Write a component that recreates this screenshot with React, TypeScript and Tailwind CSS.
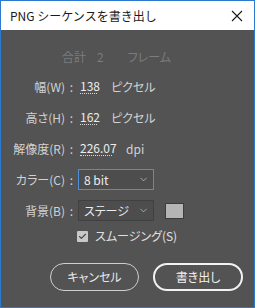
import { ChevronDown, Check } from 'lucide-react'

const font = { fontFamily: '"Noto Sans CJK JP", "Noto Sans", sans-serif' }

function Row({ label, children }: { label: string; children: React.ReactNode }) {
  return (
    <div className="flex h-[31px] items-center">
      <div className="w-[64px] shrink-0 text-right text-[12px] text-[#d2d2d2]">{label}</div>
      <div className="w-[13px] shrink-0 text-center text-[12px] text-[#d2d2d2]">:</div>
      <div className="flex items-center">{children}</div>
    </div>
  )
}

function Value({ v, w }: { v: string; w: string }) {
  return (
    <span className={`ml-[2px] ${w} border-b border-dotted border-[#d8d8d8] text-[12px] leading-[14px] text-[#ececec]`}>{v}</span>
  )
}

export default function App() {
  return (
    <div className="flex h-[308px] w-[255px] flex-col border border-[#2b79d0] bg-[#535353]" style={font}>
      {/* title bar */}
      <div className="flex h-[29px] shrink-0 items-center justify-between bg-white pl-[9px] pr-[10px]">
        <span className="text-[12px] text-[#1a1a1a]">PNG シーケンスを書き出し</span>
        <svg width="12" height="12" viewBox="0 0 12 12" className="mr-[1px]">
          <path d="M1 1 L11 11 M11 1 L1 11" stroke="#1a1a1a" strokeWidth="1.1" />
        </svg>
      </div>

      <div className="flex flex-col [font-feature-settings:'palt']">
        <div className="mt-[17px] flex h-[20px] items-center pl-[61px] text-[12px] text-[#7c7c7c]">
          <span>合計</span>
          <span className="ml-[11px]">2</span>
          <span className="ml-[24px]">フレーム</span>
        </div>

        <div className="mt-[4px] flex flex-col">
          <Row label="幅(W)">
            <Value v="138" w="w-[17px]" />
            <span className="ml-[14px] text-[12px] text-[#d2d2d2]">ピクセル</span>
          </Row>
          <Row label="高さ(H)">
            <Value v="162" w="w-[17px]" />
            <span className="ml-[14px] text-[12px] text-[#d2d2d2]">ピクセル</span>
          </Row>
          <Row label="解像度(R)">
            <Value v="226.07" w="w-[32px]" />
            <span className="ml-[14px] text-[12px] text-[#d2d2d2]">dpi</span>
          </Row>
          <Row label="カラー(C)">
            <div className="flex h-[21px] w-[76px] items-center justify-between border border-[#4b8fd8] bg-[#4d4d4d] pl-[5px] pr-[4px] text-[12px] text-[#ececec]">
              <span>8 bit</span>
              <ChevronDown size={11} strokeWidth={1.5} className="text-[#cfcfcf]" />
            </div>
          </Row>
          <Row label="背景(B)">
            <div className="flex h-[21px] w-[76px] items-center justify-between border border-[#404040] bg-[#4d4d4d] pl-[5px] pr-[4px] text-[12px] text-[#ececec]">
              <span>ステージ</span>
              <ChevronDown size={11} strokeWidth={1.5} className="text-[#cfcfcf]" />
            </div>
            <div className="ml-[11px] h-[16px] w-[19px] border border-[#3c3c3c] bg-[#b5b5b5]" />
          </Row>
          <div className="flex h-[20px] items-center pl-[76px]">
            <div className="flex h-[11px] w-[11px] items-center justify-center rounded-[1px] bg-[#c9c9c9]">
              <Check size={9} strokeWidth={3} className="text-[#4a4a4a]" />
            </div>
            <span className="ml-[7px] text-[12px] text-[#e0e0e0]">スムージング(S)</span>
          </div>
        </div>

        <div className="mt-[17px] flex pl-[49px]">
          <button className="h-[28px] w-[89px] rounded-full border border-[#cfcfcf] text-[12px] text-[#e8e8e8]">キャンセル</button>
          <button className="ml-[14px] h-[28px] w-[90px] rounded-full border-2 border-[#f2f2f2] text-[12px] text-[#f2f2f2]">書き出し</button>
        </div>
      </div>
    </div>
  )
}
